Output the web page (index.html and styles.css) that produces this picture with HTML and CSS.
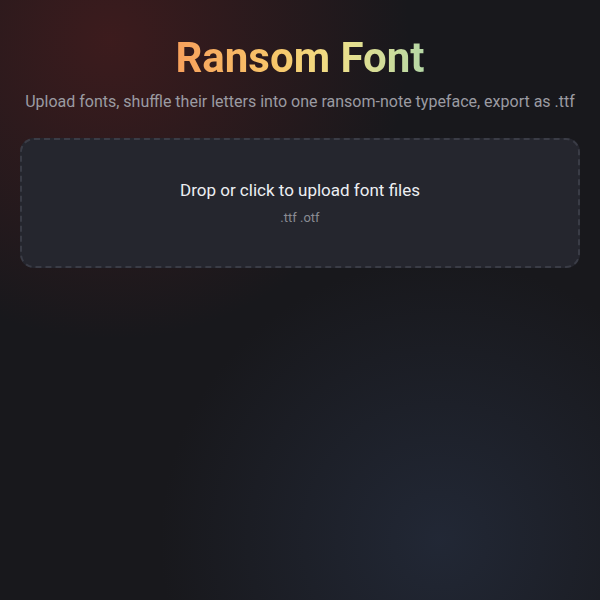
FILE: index.html
```html
<!DOCTYPE html>
<html>
<head>
<meta charset="utf-8">
<link rel="stylesheet" href="styles.css">
</head>
<body>
<main class="app">
  <h1 class="title">Ransom Font</h1>
  <p class="subtitle">Upload fonts, shuffle their letters into one ransom-note typeface, export as .ttf</p>
  <label class="drop">
    <span class="drop-main">Drop or click to upload font files</span>
    <span class="drop-sub">.ttf .otf</span>
  </label>
</main>
</body>
</html>
```
FILE: styles.css
```css
html, body {
  margin: 0;
  height: 100%;
}
body {
  font-family: Roboto, "Liberation Sans", sans-serif;
  background-color: #18181c;
  background-image:
    radial-gradient(circle at 110px 40px, rgba(90, 30, 30, 0.55) 0, rgba(90, 30, 30, 0) 300px),
    radial-gradient(circle at 440px 540px, rgba(40, 50, 70, 0.6) 0, rgba(40, 50, 70, 0) 280px);
  color: #e8e8ec;
}
.app {
  padding: 33px 20px 20px;
  display: flex;
  flex-direction: column;
  align-items: stretch;
}
.title {
  margin: 0;
  text-align: center;
  font-size: 42px;
  font-weight: 700;
  line-height: 50px;
  align-self: center;
  background: linear-gradient(90deg, #f8a05c 0%, #f7c66a 40%, #efe08a 65%, #b5d8a6 100%);
  -webkit-background-clip: text;
  background-clip: text;
  color: transparent;
}
.subtitle {
  margin: 8px 0 0;
  text-align: center;
  font-size: 16px;
  line-height: 22px;
  color: #9b9ba2;
}
.drop {
  margin-top: 25px;
  height: 126px;
  border: 2px dashed #3a3c46;
  border-radius: 14px;
  background: #25262e;
  display: flex;
  flex-direction: column;
  align-items: center;
  justify-content: center;
  gap: 10px;
  cursor: pointer;
}
.drop-main {
  font-size: 17px;
  color: #eceef2;
  margin-top: -2px;
}
.drop-sub {
  font-size: 13px;
  color: #8a8b93;
}
```
